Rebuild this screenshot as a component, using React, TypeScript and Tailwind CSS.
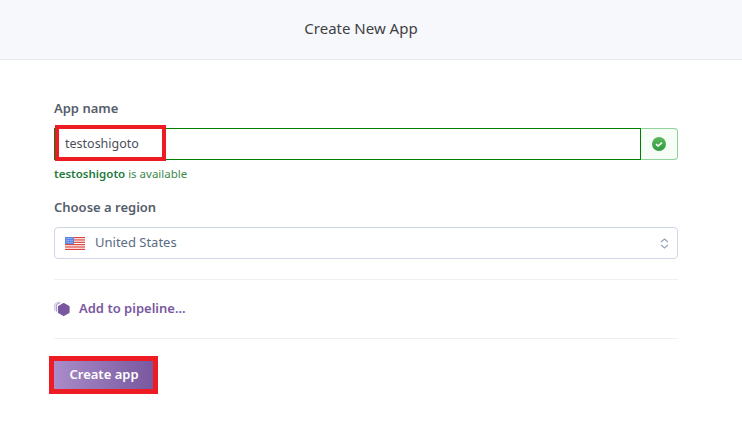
import React from "react";

const font = "font-['Noto_Sans','Open_Sans',sans-serif]";

const UsFlag = () => (
  <svg width="20" height="13" viewBox="0 0 20 13">
    <rect width="20" height="13" fill="#fff" />
    <rect y="0" width="20" height="1.2" fill="#d9443f" />
    <rect y="2.35" width="20" height="1.2" fill="#d9443f" />
    <rect y="4.7" width="20" height="1.2" fill="#d9443f" />
    <rect y="7.05" width="20" height="1.2" fill="#d9443f" />
    <rect y="9.4" width="20" height="1.2" fill="#d9443f" />
    <rect y="11.8" width="20" height="1.2" fill="#d9443f" />
    <rect width="9" height="7" fill="#5f86e0" />
    <path d="M1.5 1.5h6M1.5 3.5h6M1.5 5.5h6" stroke="#dfe8fb" strokeWidth="0.7" strokeDasharray="0.8 0.9" />
  </svg>
);

const PipelineIcon = () => (
  <svg width="16" height="16" viewBox="0 0 16 16">
    <path d="M5 0.8 L0.8 3.2 V9.5" fill="none" stroke="#c4b3dc" strokeWidth="1" />
    <path d="M6.5 1.4 L2.4 3.8 V10.6" fill="none" stroke="#a892cb" strokeWidth="1" />
    <path d="M9.7 2.6 L15 5.5 V11.5 L9.7 14.6 L4.5 11.5 V5.5 Z" fill="#79589f" stroke="#79589f" strokeWidth="1.2" strokeLinejoin="round" />
  </svg>
);

const CheckBadge = () => (
  <svg width="14" height="14" viewBox="0 0 14 14">
    <defs>
      <linearGradient id="ok" x1="0" y1="0" x2="0" y2="1">
        <stop offset="0" stopColor="#5cb85c" />
        <stop offset="1" stopColor="#2f9a42" />
      </linearGradient>
    </defs>
    <circle cx="7" cy="7" r="7" fill="url(#ok)" />
    <path d="M4 7.2 L6 9 L10 5.6" fill="none" stroke="#fff" strokeWidth="1.6" />
  </svg>
);

const SortIcon = () => (
  <svg width="9" height="11" viewBox="0 0 9 11" fill="none" stroke="#9aa5bd" strokeWidth="1.3">
    <path d="M1 4 L4.5 1 L8 4" />
    <path d="M1 7 L4.5 10 L8 7" />
  </svg>
);

export default function App() {
  return (
    <div className={`w-[742px] h-[432px] overflow-hidden bg-white ${font}`}>
      <div className="h-[60px] pb-[2px] pr-[20px] flex items-center justify-center bg-[#f7f8fb] border-b border-[#e8eaf0] text-[15px] text-[#3f3f44]">
        Create New App
      </div>

      <div className="pl-[54px] pr-[64px] pt-[39px]">
        <div className="text-[13px] leading-[18px] font-semibold text-[#555d6b]">App name</div>

        <div className="relative flex mt-[11px] h-[32px]">
          <div className="flex-1 flex items-center pl-[9px] border border-l-[2px] border-[#008000] text-[12.5px] text-[#4a4f5a]">
            testoshigoto
          </div>
          <div className="w-[37px] flex items-center justify-center bg-[#f6fcf6] border border-l-0 border-[#8fd39a] rounded-r-[4px]">
            <CheckBadge />
          </div>
          <div className="absolute left-[1px] top-[-3px] w-[111px] h-[36px] border-[4px] border-[#ed1c24]" />
        </div>

        <div className="mt-[6px] text-[11.5px] leading-[16px] text-[#3c8a4a]">
          <span className="font-semibold text-[#1f7a3d]">testoshigoto</span> is available
        </div>

        <div className="mt-[16px] text-[13px] leading-[18px] font-semibold text-[#555d6b]">Choose a region</div>

        <div className="flex items-center h-[32px] mt-[11px] pl-[10px] pr-[8px] border border-[#cfd7e6] rounded-[4px] text-[13px] text-[#596b85]">
          <UsFlag />
          <span className="ml-[10px] flex-1">United States</span>
          <SortIcon />
        </div>

        <div className="mt-[20px] border-t border-[#eef0f4]" />

        <div className="flex items-center h-[58px] gap-[9px] text-[13px] font-semibold text-[#79589f]">
          <PipelineIcon />
          <span>Add to pipeline...</span>
        </div>

        <div className="border-t border-[#eef0f4]" />

        <div className="relative w-[99px] mt-[22px]">
          <div className="h-[28px] pl-[1px] flex items-center justify-center bg-gradient-to-r from-[#a98cc9] to-[#79589f] text-white text-[13px] font-semibold">
            Create app
          </div>
          <div className="absolute -inset-[5px] border-[5px] border-[#ed1c24]" />
        </div>
      </div>
    </div>
  );
}
